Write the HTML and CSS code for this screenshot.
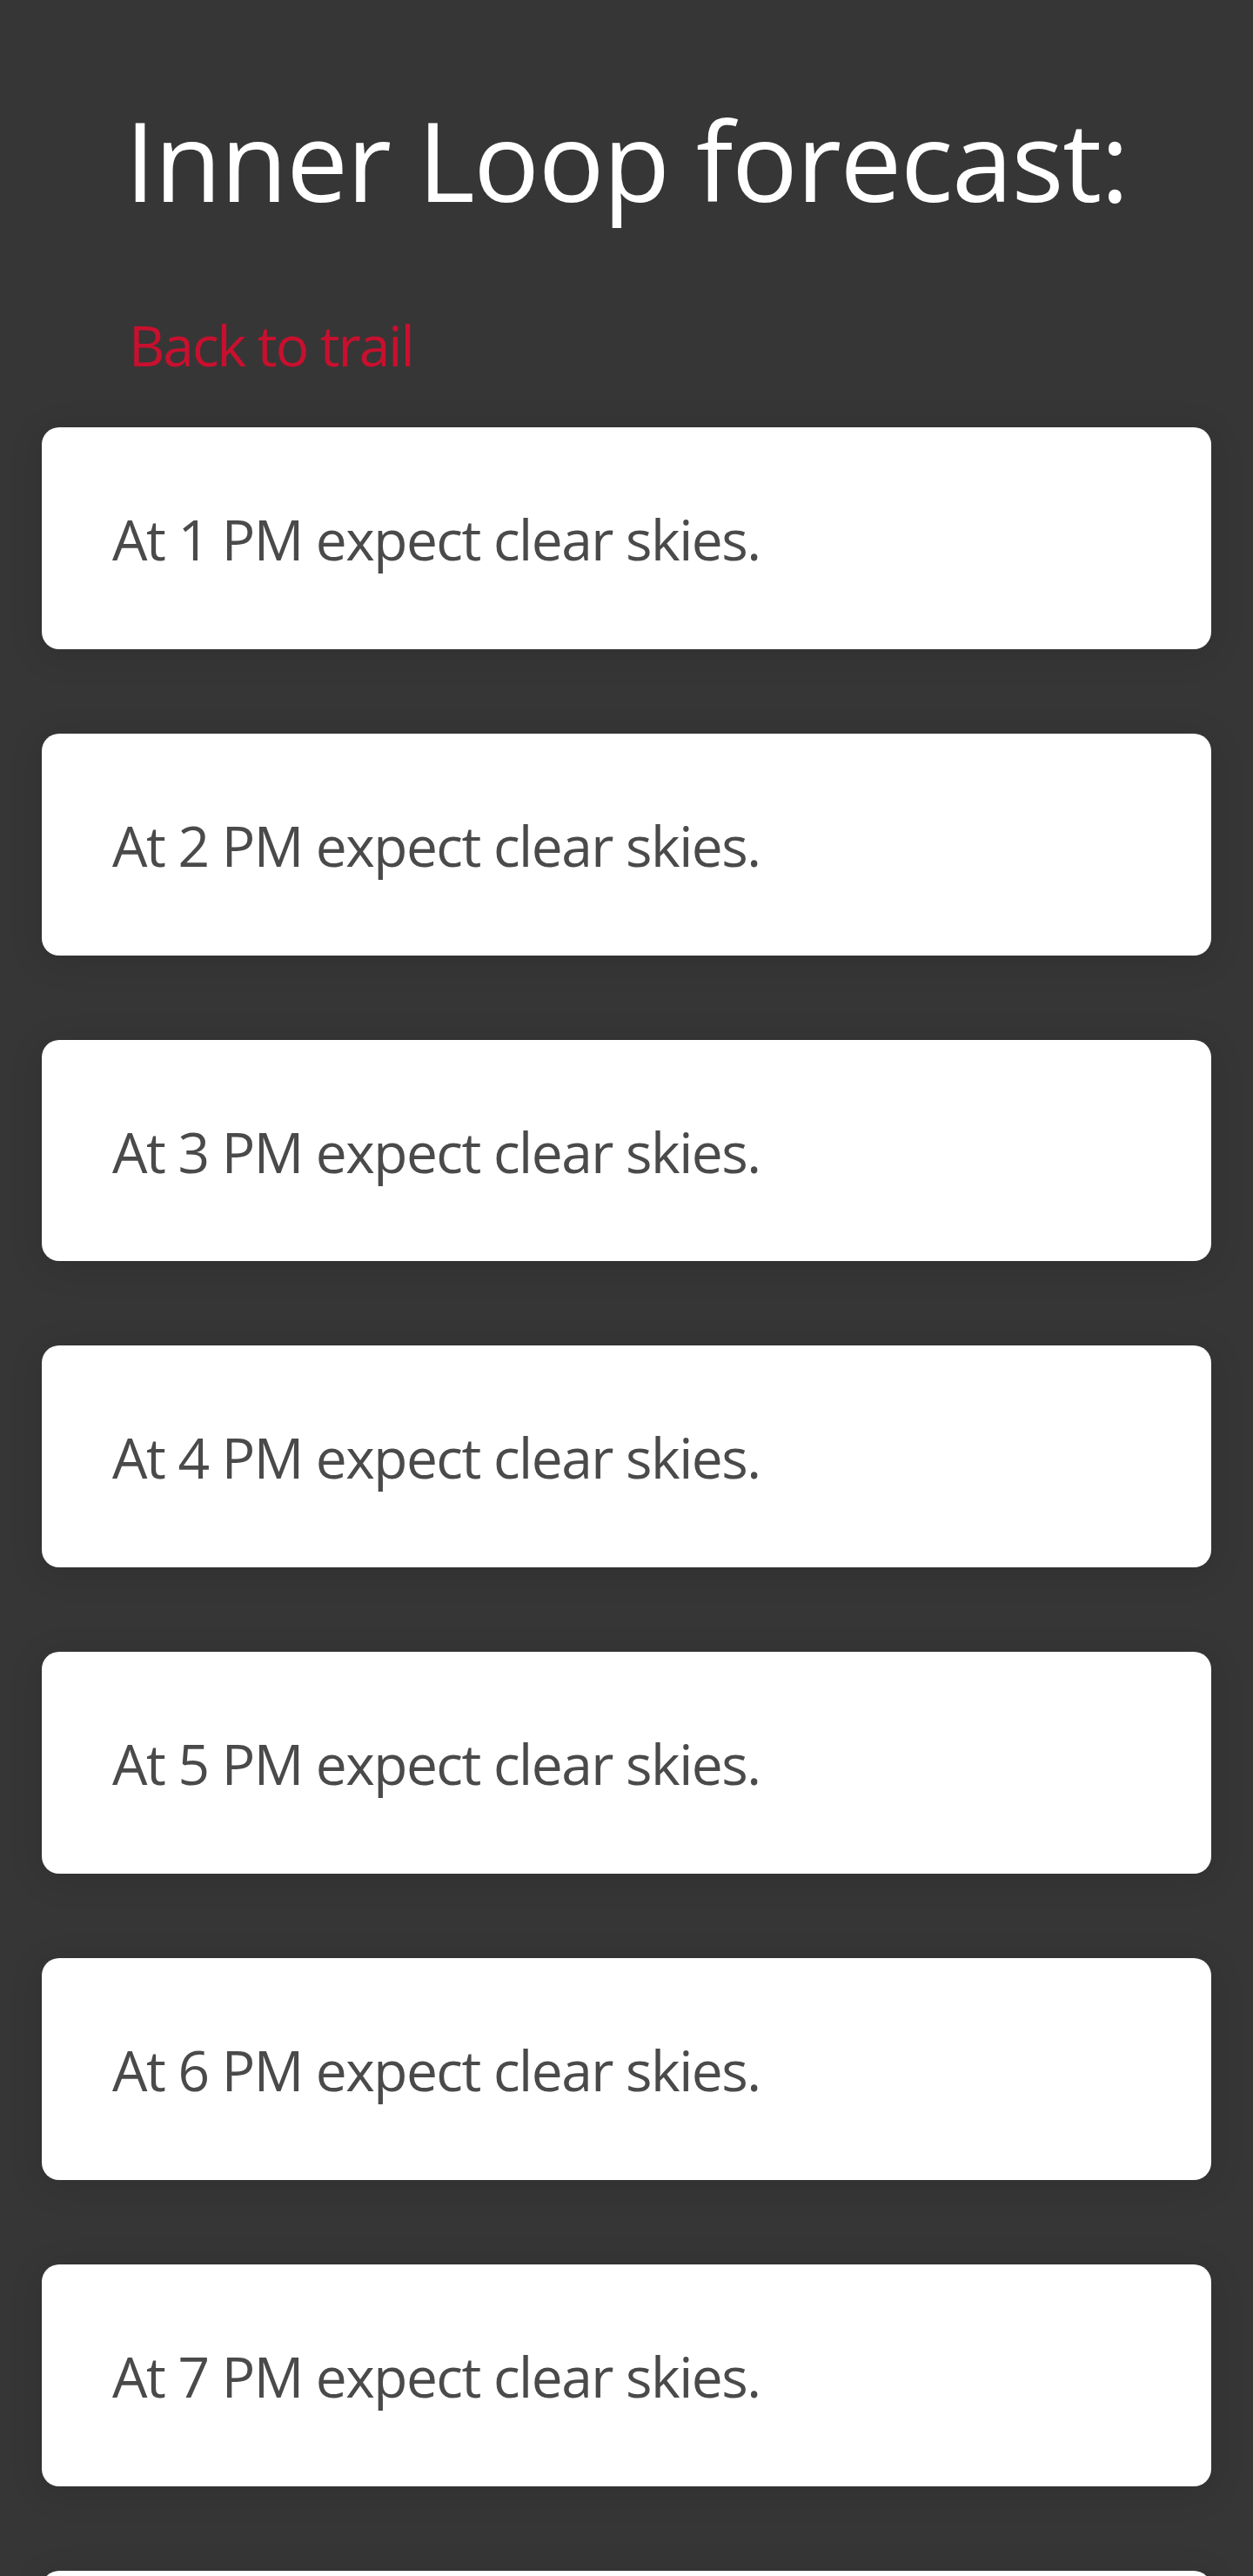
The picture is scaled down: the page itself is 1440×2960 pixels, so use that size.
FILE: index.html
```html
<!DOCTYPE html>
<html lang="en">
<head>
<meta charset="utf-8">
<title>Inner Loop forecast</title>
<link rel="stylesheet" href="styles.css">
</head>
<body>
<main class="page">
  <h1 class="title">Inner Loop forecast:</h1>
  <nav class="nav"><a class="back" href="#">Back to trail</a></nav>
  <ul class="forecast">
    <li class="card">At 1 PM expect clear skies.</li>
    <li class="card">At 2 PM expect clear skies.</li>
    <li class="card">At 3 PM expect clear skies.</li>
    <li class="card">At 4 PM expect clear skies.</li>
    <li class="card">At 5 PM expect clear skies.</li>
    <li class="card">At 6 PM expect clear skies.</li>
    <li class="card">At 7 PM expect clear skies.</li>
    <li class="card">At 8 PM expect clear skies.</li>
    <li class="card">At 9 PM expect clear skies.</li>
  </ul>
</main>
</body>
</html>
```

FILE: styles.css
```css
html, body {
  margin: 0;
  padding: 0;
  background: #363636;
}
body {
  font-family: "Open Sans", "Noto Sans", sans-serif;
}
.page {
  display: flex;
  flex-direction: column;
  padding: 108px 48px 0;
}
.title {
  margin: 0;
  font-size: 126px;
  line-height: 1.2;
  font-weight: 400;
  color: #ffffff;
  text-align: center;
  letter-spacing: -1.4px;
}
.nav {
  margin-top: 100px;
  padding-left: 100px;
}
.back {
  font-size: 64px;
  line-height: 1.2;
  color: #c8102e;
  text-decoration: none;
  letter-spacing: -2px;
}
.forecast {
  list-style: none;
  margin: 55px 0 0;
  padding: 0;
  display: flex;
  flex-direction: column;
  gap: 97px;
}
.card {
  background: #ffffff;
  border-radius: 20px;
  padding: 91px 81px 87px;
  font-size: 64px;
  line-height: 1.2;
  color: #4a4a4a;
  box-shadow: 0 6px 40px rgba(0, 0, 0, 0.12);
  letter-spacing: -1.5px;
}
```
